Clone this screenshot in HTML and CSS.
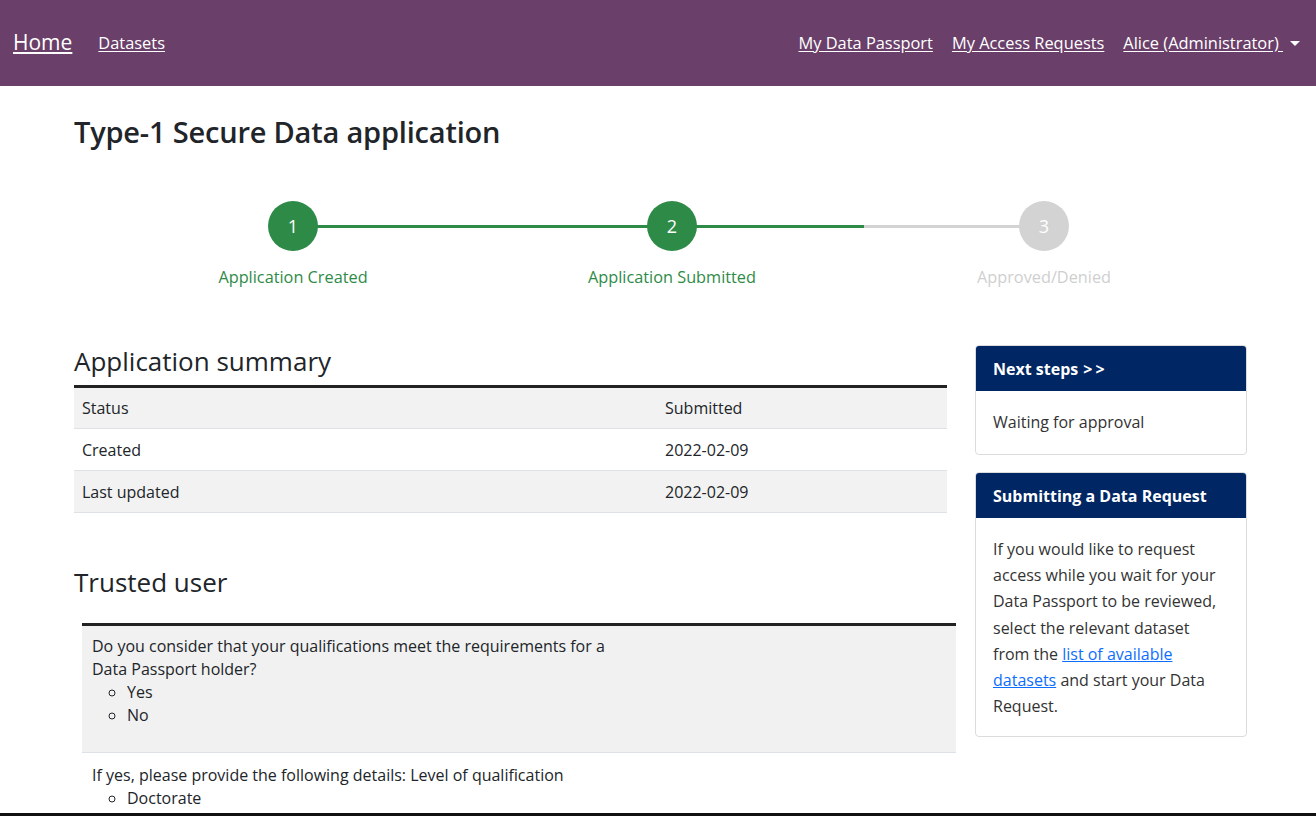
FILE: index.html
```html
<!DOCTYPE html>
<html lang="en">
<head>
<meta charset="utf-8">
<title>Type-1 Secure Data application</title>
<link rel="stylesheet" href="styles.css">
</head>
<body>
<nav class="navbar">
  <div class="nav-left">
    <a class="brand" href="#">Home</a>
    <a class="nav-link" href="#">Datasets</a>
  </div>
  <div class="nav-right">
    <a class="nav-link" href="#">My Data Passport</a>
    <a class="nav-link" href="#">My Access Requests</a>
    <a class="nav-link dropdown" href="#">Alice (Administrator) <span class="caret"></span></a>
  </div>
</nav>

<main class="container">
  <h1 class="page-title">Type-1 Secure Data application</h1>

  <ol class="stepper">
    <li class="step done first"><span class="circle">1</span><span class="label">Application Created</span></li>
    <li class="step done current"><span class="circle">2</span><span class="label">Application Submitted</span></li>
    <li class="step todo last"><span class="circle">3</span><span class="label">Approved/Denied</span></li>
  </ol>

  <div class="row">
    <div class="main-col">
      <h2 class="section-title">Application summary</h2>
      <table class="summary">
        <tbody>
          <tr class="shade"><td class="key">Status</td><td>Submitted</td></tr>
          <tr><td class="key">Created</td><td>2022-02-09</td></tr>
          <tr class="shade"><td class="key">Last updated</td><td>2022-02-09</td></tr>
        </tbody>
      </table>

      <h2 class="section-title trusted-title">Trusted user</h2>
      <div class="qa-box">
        <div class="qa shade">
          <p class="question">Do you consider that your qualifications meet the requirements for a<br>Data Passport holder?</p>
          <ul class="answers">
            <li>Yes</li>
            <li>No</li>
          </ul>
        </div>
        <div class="qa qa-last">
          <p class="question">If yes, please provide the following details: Level of qualification</p>
          <ul class="answers">
            <li>Doctorate</li>
          </ul>
        </div>
      </div>
    </div>

    <aside class="side-col">
      <div class="card">
        <div class="card-header">Next steps <span class="arrows">&gt;&gt;</span></div>
        <div class="card-body">Waiting for approval</div>
      </div>
      <div class="card">
        <div class="card-header">Submitting a Data Request</div>
        <div class="card-body long">If you would like to request access while you wait for your Data Passport to be reviewed, select the relevant dataset from the <a href="#">list of available datasets</a> and start your Data Request.</div>
      </div>
    </aside>
  </div>
</main>
<div class="next-block"></div>
</body>
</html>
```

FILE: styles.css
```css
* { box-sizing: border-box; }

html, body {
  margin: 0;
  padding: 0;
}

body {
  font-family: "Segoe UI", "Open Sans", "Noto Sans", sans-serif;
  font-size: 16px;
  color: #212529;
  background: #fff;
}

/* Navbar */
.navbar {
  height: 86px;
  background: #6a3f6a;
  display: flex;
  align-items: center;
  justify-content: space-between;
  padding: 0 16px 2px 13px;
}
.nav-left, .nav-right {
  display: flex;
  align-items: center;
}
.navbar a {
  color: #fff;
  text-decoration: underline;
  text-underline-offset: 2px;
}
.brand {
  font-size: 21px;
  margin-right: 26px;
}
.nav-link {
  font-size: 16.4px;
}
.nav-right .nav-link { margin-left: 19px; }
.caret {
  display: inline-block;
  width: 0;
  height: 0;
  margin-left: 7px;
  vertical-align: 3px;
  border-left: 5px solid transparent;
  border-right: 5px solid transparent;
  border-top: 5px solid #fff;
}

/* Container */
.container {
  width: 1173px;
  margin: 0 0 0 74px;
  padding: 0;
}

.page-title {
  font-size: 29px;
  font-weight: 600;
  margin: 0;
  padding-top: 28px;
  line-height: 36px;
  letter-spacing: -0.2px;
}

/* Stepper */
.stepper {
  list-style: none;
  margin: 51px 0 0 32px;
  padding: 0;
  display: grid;
  grid-template-columns: 374px 384px 360px;
}
.step {
  position: relative;
  display: flex;
  flex-direction: column;
  align-items: center;
}
.step::before, .step::after {
  content: "";
  position: absolute;
  top: 24px;
  height: 3px;
  width: 50%;
  background: #d3d3d3;
  z-index: 0;
}
.step::before { left: 0; }
.step::after { right: 0; }
.step.first::before, .step.last::after { display: none; }
.step.done::after, .step.done::before { background: #2e8b47; }
.circle {
  position: relative;
  z-index: 1;
  width: 50px;
  height: 50px;
  border-radius: 50%;
  display: flex;
  align-items: center;
  justify-content: center;
  color: #fff;
  font-size: 18px;
}
.step.done .circle { background: #2e8b47; }
.step.todo .circle { background: #d3d3d3; }
.label {
  margin-top: 15px;
  font-size: 16.3px;
  line-height: 22px;
}
.step.done .label { color: #2e8b47; }
.step.todo .label { color: #cfcfcf; }

/* Layout row */
.row {
  display: flex;
  gap: 28px;
  margin-top: 38px;
}
.main-col {
  width: 873px;
}
.side-col {
  width: 272px;
  padding-top: 19px;
}

.section-title {
  font-size: 26px;
  font-weight: 500;
  margin: 0;
  line-height: 34px;
  padding-top: 18px;
  padding-bottom: 7px;
}

/* Summary table */
.summary {
  width: 100%;
  border-collapse: collapse;
  border-top: 3px solid #222;
}
.summary td {
  padding: 0 8px;
  height: 42px;
  border-bottom: 1px solid #dee2e6;
  vertical-align: middle;
}
.summary td.key { width: 583px; }
.summary tr.shade td { background: #f2f2f2; }

.trusted-title {
  margin-top: 42px;
  margin-bottom: 17px;
  padding-top: 10px;
}

/* Q&A */
.qa-box {
  margin-left: 8px;
  width: 874px;
  border-top: 3px solid #222;
}
.qa {
  padding: 9px 10px 25px;
  border-bottom: 1px solid #dee2e6;
}
.qa.shade {
  background: #f1f1f1;
}
.qa.qa-last {
  border-bottom: none;
  padding-top: 11px;
  padding-bottom: 3px;
}
.question {
  margin: 0;
  line-height: 23px;
}
.answers {
  margin: 0;
  padding-left: 35px;
  list-style: circle;
  line-height: 23px;
}
.next-block {
  width: 100%;
  border-top: 3px solid #111;
  height: 60px;
}

/* Cards */
.card {
  border: 1px solid #dcdcdc;
  border-radius: 4px;
  overflow: hidden;
  margin-bottom: 17px;
}
.card-header {
  background: #002663;
  color: #fff;
  font-weight: 700;
  font-size: 16px;
  height: 45px;
  display: flex;
  align-items: center;
  padding: 0 17px;
}
.arrows {
  margin-left: 5px;
  letter-spacing: 3px;
}
.card-body {
  padding: 20px 17px 21px;
  line-height: 22px;
  color: #333;
}
.card-body.long {
  line-height: 26.2px;
  padding: 18px 17px 17px;
}
.card-body a {
  color: #0d6efd;
  text-decoration: underline;
}
```
